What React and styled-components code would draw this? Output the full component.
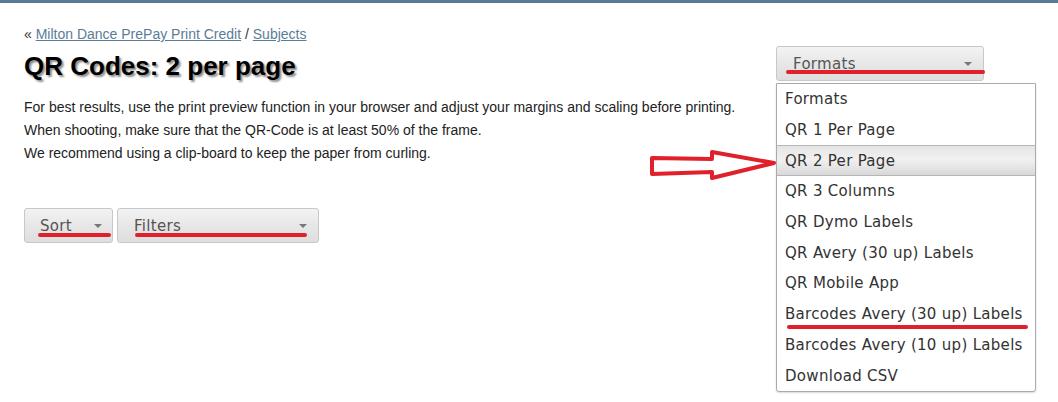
import React from "react";
import styled, { createGlobalStyle } from "styled-components";

const Global = createGlobalStyle`
  html, body, #root { margin: 0; padding: 0; background: #fff; min-height: 100%; height: 100%; }
  body { font-family: "Liberation Sans", Arial, sans-serif; color: #222; }
`;

const Screen = styled.div`
  min-height: 402px;
  height: 100%;
`;

const TopBar = styled.div`
  height: 3px;
  background: #587a95;
`;

const Page = styled.div`
  position: relative;
  padding: 21px 22px 0 24px;
`;

const Header = styled.div`
  display: flex;
  justify-content: space-between;
  align-items: flex-start;
`;

const Intro = styled.div`
  display: flex;
  flex-direction: column;
`;

const Crumbs = styled.div`
  font-size: 14px;
  line-height: 20px;
  color: #333;
`;

const CrumbLink = styled.a`
  color: #5b7c96;
  text-decoration: underline;
`;

const Title = styled.h1`
  margin: 7px 0 0;
  font-size: 26px;
  line-height: 31px;
  font-weight: bold;
  color: #000;
  text-shadow: 2px 2px 2px rgba(0, 0, 0, 0.45);
`;

const Notes = styled.div`
  margin-top: 14px;
  font-size: 14px;
  line-height: 23px;
  color: #222;
`;

const Line = styled.div``;

const SelectWrap = styled.div`
  position: relative;
  width: 260px;
  margin-top: 22px;
`;

const SelectButton = styled.div`
  position: relative;
  box-sizing: border-box;
  width: ${(p) => p.$w}px;
  height: 35px;
  display: flex;
  align-items: center;
  justify-content: space-between;
  padding: 0 ${(p) => p.$pr}px 0 ${(p) => p.$pl}px;
  border: 1px solid #c8c8c8;
  border-radius: 3px;
  background: linear-gradient(#f3f3f3, #e6e6e6 55%, #dedede);
  font-family: "DejaVu Sans", Verdana, sans-serif;
  font-size: 15px;
  letter-spacing: 0.3px;
  color: #555;
`;

const Caret = styled.span`
  width: 0;
  height: 0;
  border-left: 4px solid transparent;
  border-right: 4px solid transparent;
  border-top: 4px solid #777;
  margin-top: 1px;
`;

const RedLine = styled.span`
  position: absolute;
  left: ${(p) => p.$l}px;
  width: ${(p) => p.$w}px;
  bottom: ${(p) => p.$b}px;
  height: 4px;
  border-radius: 2px;
  background: #e0202a;
`;

const Menu = styled.ul`
  position: absolute;
  top: 37px;
  left: 0;
  width: 260px;
  box-sizing: border-box;
  margin: 0;
  padding: 0;
  list-style: none;
  border: 1px solid #aaa;
  border-radius: 0 0 3px 3px;
  background: #fff;
  box-shadow: 0 1px 2px rgba(0, 0, 0, 0.15);
`;

const Item = styled.li`
  position: relative;
  box-sizing: border-box;
  height: 30.7px;
  display: flex;
  align-items: center;
  padding-left: 8px;
  font-family: "DejaVu Sans", Verdana, sans-serif;
  font-size: 15px;
  letter-spacing: 0.3px;
  color: #333;
  ${(p) =>
    p.$active &&
    `
    background: linear-gradient(#e4e4e4, #f1f1f1 45%, #e2e2e2 80%, #d8d8d8);
    border-top: 1px solid #b5b5b5;
    border-bottom: 1px solid #b5b5b5;
  `}
`;

const Toolbar = styled.div`
  display: flex;
  gap: 4px;
  margin-top: 43px;
`;

const Arrow = styled.svg`
  position: absolute;
  left: 648px;
  top: 145px;
`;

const formats = [
  "Formats",
  "QR 1 Per Page",
  "QR 2 Per Page",
  "QR 3 Columns",
  "QR Dymo Labels",
  "QR Avery (30 up) Labels",
  "QR Mobile App",
  "Barcodes Avery (30 up) Labels",
  "Barcodes Avery (10 up) Labels",
  "Download CSV",
];

export default function App() {
  return (
    <Screen>
      <Global />
      <TopBar />
      <Page>
        <Header>
          <Intro>
            <Crumbs>
              « <CrumbLink href="#">Milton Dance PrePay Print Credit</CrumbLink> /{" "}
              <CrumbLink href="#">Subjects</CrumbLink>
            </Crumbs>
            <Title>QR Codes: 2 per page</Title>
            <Notes>
              <Line>
                For best results, use the print preview function in your browser and adjust your
                margins and scaling before printing.
              </Line>
              <Line>When shooting, make sure that the QR-Code is at least 50% of the frame.</Line>
              <Line>We recommend using a clip-board to keep the paper from curling.</Line>
            </Notes>
          </Intro>
          <SelectWrap>
            <SelectButton $w={208} $pl={16} $pr={11}>
              Formats
              <Caret />
              <RedLine $l={9} $w={199} $b={6} />
            </SelectButton>
            <Menu>
              {formats.map((f, i) => (
                <Item key={f} $active={i === 2}>
                  {f}
                  {i === 7 && <RedLine $l={10} $w={241} $b={1} />}
                </Item>
              ))}
            </Menu>
          </SelectWrap>
        </Header>
        <Toolbar>
          <SelectButton $w={89} $pl={15} $pr={10}>
            Sort
            <Caret />
            <RedLine $l={13} $w={73} $b={5} />
          </SelectButton>
          <SelectButton $w={202} $pl={16} $pr={11}>
            Filters
            <Caret />
            <RedLine $l={17} $w={172} $b={5} />
          </SelectButton>
        </Toolbar>
        <Arrow width="130" height="36" viewBox="0 0 130 36">
          <path
            d="M4 10 L64 11 L64 4 L126 15 L64 30 L64 24 L4 26 Z"
            fill="none"
            stroke="#e0202a"
            strokeWidth="4"
            strokeLinejoin="round"
          />
        </Arrow>
      </Page>
    </Screen>
  );
}
